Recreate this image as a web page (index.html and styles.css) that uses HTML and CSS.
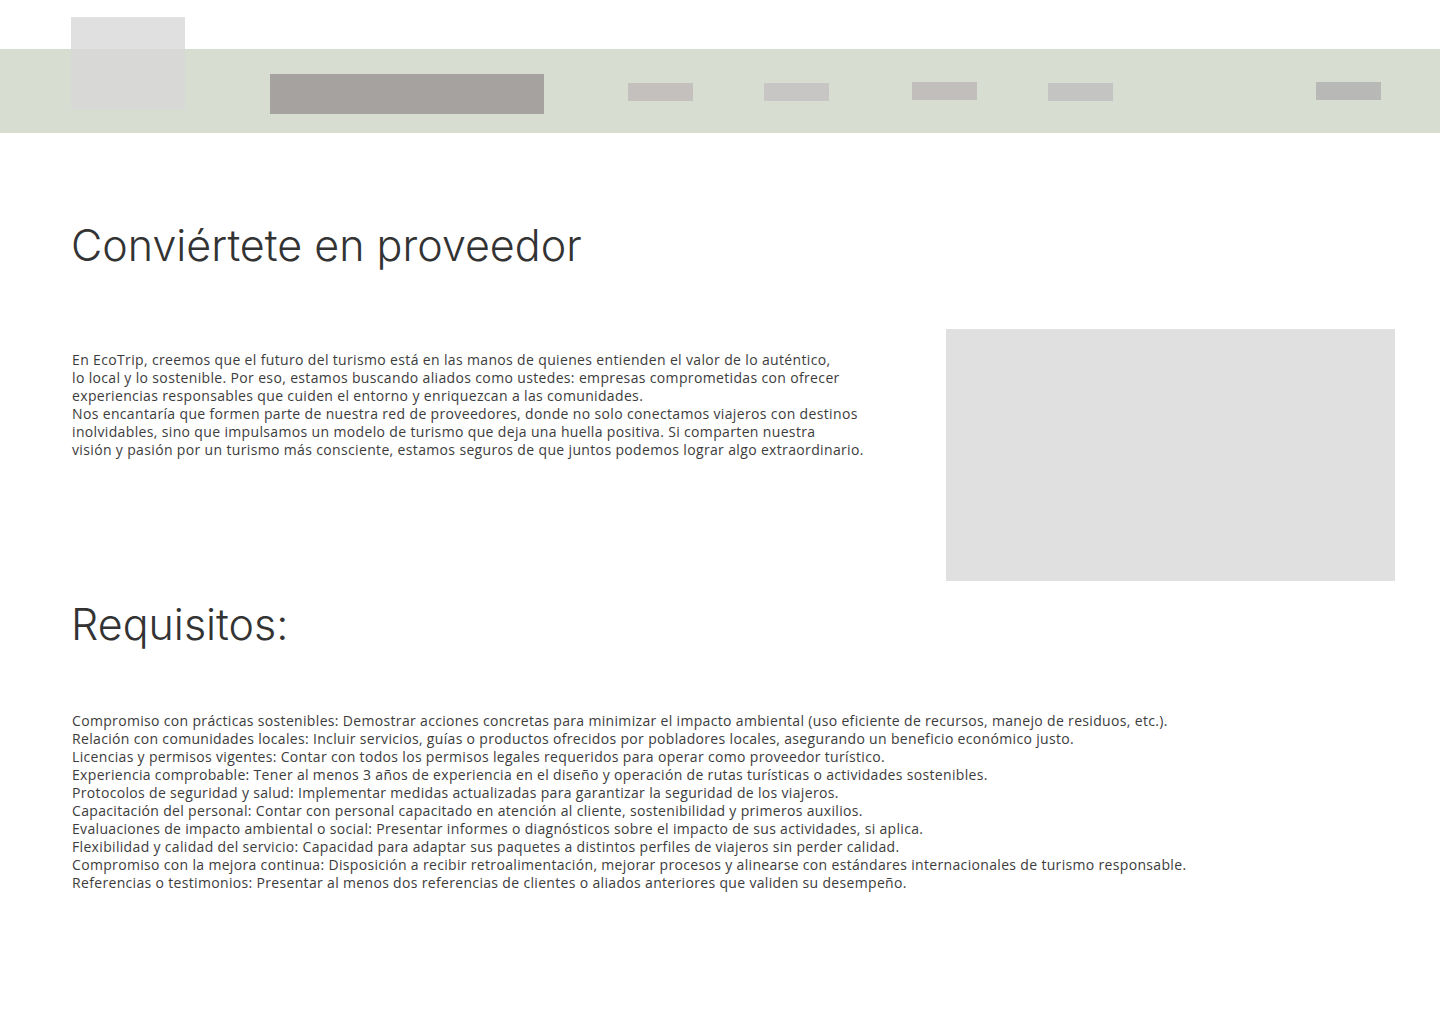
FILE: index.html
```html
<!DOCTYPE html>
<html lang="es">
<head>
<meta charset="utf-8">
<title>EcoTrip - Conviértete en proveedor</title>
<link rel="stylesheet" href="styles.css">
</head>
<body>
<header class="site-header">
  <div class="logo" aria-label="EcoTrip"></div>
  <nav class="nav-band">
    <div class="search"></div>
    <div class="nav-item nav-1"></div>
    <div class="nav-item nav-2"></div>
    <div class="nav-item nav-3"></div>
    <div class="nav-item nav-4"></div>
    <div class="nav-item nav-5"></div>
  </nav>
</header>
<main class="content">
  <h1 class="title">Conviértete en proveedor</h1>
  <section class="intro">
    <p class="intro-text">En EcoTrip, creemos que el futuro del turismo está en las manos de quienes entienden el valor de lo auténtico,<br>lo local y lo sostenible. Por eso, estamos buscando aliados como ustedes: empresas comprometidas con ofrecer<br>experiencias responsables que cuiden el entorno y enriquezcan a las comunidades.<br>Nos encantaría que formen parte de nuestra red de proveedores, donde no solo conectamos viajeros con destinos<br>inolvidables, sino que impulsamos un modelo de turismo que deja una huella positiva. Si comparten nuestra<br>visión y pasión por un turismo más consciente, estamos seguros de que juntos podemos lograr algo extraordinario.</p>
    <div class="photo"></div>
  </section>
  <h2 class="title title-req">Requisitos:</h2>
  <ul class="req-list">
    <li>Compromiso con prácticas sostenibles: Demostrar acciones concretas para minimizar el impacto ambiental (uso eficiente de recursos, manejo de residuos, etc.).</li>
    <li>Relación con comunidades locales: Incluir servicios, guías o productos ofrecidos por pobladores locales, asegurando un beneficio económico justo.</li>
    <li>Licencias y permisos vigentes: Contar con todos los permisos legales requeridos para operar como proveedor turístico.</li>
    <li>Experiencia comprobable: Tener al menos 3 años de experiencia en el diseño y operación de rutas turísticas o actividades sostenibles.</li>
    <li>Protocolos de seguridad y salud: Implementar medidas actualizadas para garantizar la seguridad de los viajeros.</li>
    <li>Capacitación del personal: Contar con personal capacitado en atención al cliente, sostenibilidad y primeros auxilios.</li>
    <li>Evaluaciones de impacto ambiental o social: Presentar informes o diagnósticos sobre el impacto de sus actividades, si aplica.</li>
    <li>Flexibilidad y calidad del servicio: Capacidad para adaptar sus paquetes a distintos perfiles de viajeros sin perder calidad.</li>
    <li>Compromiso con la mejora continua: Disposición a recibir retroalimentación, mejorar procesos y alinearse con estándares internacionales de turismo responsable.</li>
    <li>Referencias o testimonios: Presentar al menos dos referencias de clientes o aliados anteriores que validen su desempeño.</li>
  </ul>
</main>
</body>
</html>
```
FILE: styles.css
```css
* { box-sizing: border-box; }

body {
  margin: 0;
  background: #ffffff;
  font-family: "Open Sans", "Noto Sans", sans-serif;
  color: #3c3c3c;
}

.site-header {
  position: relative;
  padding-top: 49px;
}

.logo {
  position: absolute;
  left: 71px;
  top: 17px;
  width: 114px;
  height: 92px;
  background: rgba(216, 216, 216, 0.8);
  z-index: 2;
}

.nav-band {
  height: 84px;
  background: #d8ddd2;
  display: flex;
  align-items: flex-start;
  padding-left: 270px;
}

.search {
  width: 274px;
  height: 40px;
  margin-top: 25px;
  background: #a6a29f;
}

.nav-item {
  width: 65px;
  height: 18px;
  margin-top: 34px;
}

.nav-1 { margin-left: 84px; background: #c4c0bd; }
.nav-2 { margin-left: 71px; background: #c8c6c4; }
.nav-3 { margin-left: 83px; margin-top: 33px; background: #c2bebb; }
.nav-4 { margin-left: 71px; background: #c4c4c2; }
.nav-5 { margin-left: 203px; margin-top: 33px; background: #b8b8b6; }

.content {
  padding: 0 45px 0 71px;
}

.title {
  margin: 88px 0 0;
  font-family: "Inter", "Noto Sans", sans-serif;
  font-weight: 300;
  font-size: 43px;
  line-height: 48px;
  color: #333333;
}

.intro {
  display: flex;
  justify-content: space-between;
  align-items: flex-start;
  margin-top: 60px;
}

.intro-text {
  margin: 22px 0 0 1px;
  font-size: 14px;
  line-height: 18px;
  letter-spacing: 0.35px;
  white-space: nowrap;
}

.photo {
  width: 449px;
  height: 252px;
  background: #e0e0e0;
  flex-shrink: 0;
}

.title-req {
  margin-top: 19px;
}

.req-list {
  list-style: none;
  margin: 64px 0 0 1px;
  padding: 0;
  font-size: 14px;
  line-height: 18px;
  letter-spacing: 0.33px;
  white-space: nowrap;
}
```
